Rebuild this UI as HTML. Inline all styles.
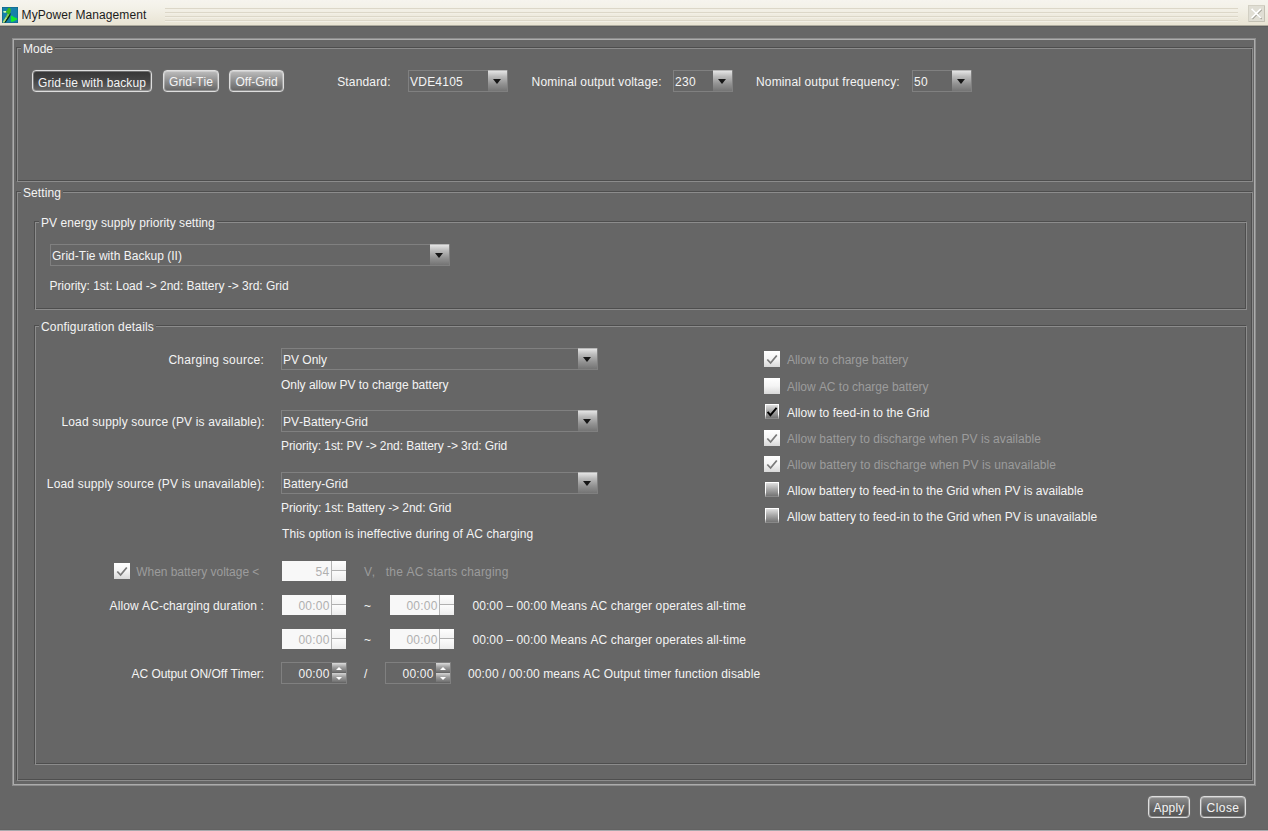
<!DOCTYPE html>
<html><head><meta charset="utf-8"><title>MyPower Management</title>
<style>
html,body{margin:0;padding:0}
body{width:1268px;height:831px;position:relative;overflow:hidden;background:#666;font:12px/14px "Liberation Sans",sans-serif;color:#f4f4f4;font-kerning:none}
.a{position:absolute}
.t{position:absolute;white-space:nowrap;height:14px;line-height:14px}
.d{color:#9c9c9c}
.ed{position:absolute;box-sizing:border-box;border:1px solid #4e4e4e}
.el{position:absolute;box-sizing:border-box;border:1px solid #8c8c8c}
.gt{position:absolute;white-space:nowrap;height:14px;line-height:14px;background:#666;padding:0 2px}
#tb{left:0;top:0;width:1268px;height:27px;background:linear-gradient(#f6f4ee 0,#f3f1e8 8px,#e9e4d4 24.5px,#e6e1d0 25px,#aeab9e 25px,#aeab9e 26px,#5c5c5c 26px,#5c5c5c 27px)}
.cb{position:absolute;box-sizing:border-box;height:22px;border:1px solid #808080}
.cb i{position:absolute;right:0;top:-1px;width:19px;height:21px;background:linear-gradient(#b8b8b8 0,#b8b8b8 1px,#e4e4e4 1px,#bcbcbc 30%,#939393 65%,#747474)}
.cb i:after{content:"";position:absolute;left:5px;top:9px;border:4.5px solid transparent;border-top:5px solid #161616;border-bottom:0}
.cb span{position:absolute;left:1px;top:4px;white-space:nowrap}
.btn{position:absolute;box-sizing:border-box;height:22px;border:1px solid #dedede;border-radius:4px;text-align:center;line-height:23px;background:linear-gradient(#bebebe,#8e8e8e 50%,#646464);color:#f4f4f4;box-shadow:inset 0 0 0 1px rgba(255,255,255,.28),0 0 1px rgba(255,255,255,.35);white-space:nowrap}
.btn.sel{background:linear-gradient(#363636,#464646 50%,#686868);line-height:25px}
.btn.dk{background:linear-gradient(#8e8e8e,#686868 50%,#545454)}
.ck{position:absolute;box-sizing:border-box;width:16px;height:16px}
.ck.dis{background:linear-gradient(#fff,#f4f4f4 50%,#d8d8d8)}
.ck.en{width:14px;height:15px;background:linear-gradient(#fff,#fff) top/100% 1px no-repeat,linear-gradient(#fff 0,#fff 70%,#8c8c8c) left/1px 100% no-repeat,linear-gradient(#fff 0,#fff 70%,#8c8c8c) right/1px 100% no-repeat,linear-gradient(#888,#888) bottom/100% 1px no-repeat,linear-gradient(#e8e8e8,#a6a6a6 50%,#6c6c6c)}
.ck svg{position:absolute;left:0;top:0}
.sp{position:absolute;box-sizing:border-box;width:64px;height:20px}
.sp.dis{background:#f8f8f8;color:#b0b0b0}
.sp.en{border:1px solid #808080;height:22px;width:66px}
.sp span{position:absolute;right:16.5px;top:4px;white-space:nowrap}
.sp.en span{right:16.4px;top:4px}
.sp b{position:absolute;right:0;top:0;width:15px;height:20px;border-left:1px solid #b4b4b4;box-sizing:border-box;background:linear-gradient(#fefefe 0,#f2f2f2 9px,#b0b0b0 9px,#b0b0b0 10px,#fcfcfc 10px,#ececec 20px)}
.sp u,.sp s{position:absolute;right:0;width:14px;text-decoration:none}
.sp u{top:0;height:9px;background:linear-gradient(#dcdcdc,#a0a0a0 45%,#707070)}
.sp s{top:10px;height:9px;background:linear-gradient(#d4d4d4,#9c9c9c 45%,#707070)}
.sp u:after{content:"";position:absolute;left:4px;top:3.5px;border:3px solid transparent;border-bottom:3px solid #fff;border-top:0}
.sp s:after{content:"";position:absolute;left:4px;top:3.5px;border:3px solid transparent;border-top:3px solid #fff;border-bottom:0}
</style></head><body>
<div class="a" id="tb"></div>
<svg class="a" style="left:2px;top:7px" width="16" height="16" viewBox="0 0 16 16">
<rect width="16" height="16" fill="#1681ab"/>
<path d="M0 0H16V16H0Z" fill="none" stroke="#11617f" stroke-width="1"/>
<path d="M8.6 6 C8.8 8 8 9.6 6.6 11.4 L3.6 15.6 L1.8 15.6 L6 9 Z" fill="#0a2c0c"/>
<path d="M6.8 0.7 C8.4 0.5 9 1.8 8.8 3.6 C8.7 5.2 8.2 6.6 7.2 7.6 L5.2 7.2 C5.5 6.6 5.5 6 5.4 5.6 L3 6 L1.4 5.2 L1.6 4 L5.2 3.8 C5.2 2.4 5.6 1 6.8 0.7Z" fill="#3cba1a"/>
<path d="M1.4 4.1 L4 3.9 L4.2 5.4 L2.6 5.7 L1.4 5.2Z" fill="#c9f2cf"/>
<path d="M5.4 6.8 L7.4 7.4 C6.6 9 5.6 10.4 4.4 12 L2.2 15.4 L0.6 15.2 L3.6 10.4 C4.4 9.2 5 8 5.4 6.8Z" fill="#86cc4c"/>
<path d="M3.8 10.2 L5 11 L2.2 15.4 L0.6 15.2Z" fill="#b4e27c"/>
<path d="M8.8 8.7 L10.8 8.7 L10.8 9.6 L15.2 11.4 L15.2 12.4 L10.8 14.8 L8.8 14.8Z" fill="#14ea2c"/>
</svg>
<div class="t" style="left:21.60px;top:8px;letter-spacing:0.073px;color:#1c1c1c">MyPower Management</div>
<div class="a" style="left:165px;top:8px;width:1073px;height:14px;background:repeating-linear-gradient(#dcd7c8 0,#dcd7c8 1px,#f2efe5 1px,#f2efe5 2px,transparent 2px,transparent 4px)"></div>
<svg class="a" style="left:1248px;top:5px" width="17" height="17" viewBox="0 0 17 17">
<rect x="0.5" y="0.5" width="16" height="16" fill="#e0ded4" stroke="#d3d0c4"/>
<path d="M1 16.5H16.5V1" fill="none" stroke="#c4c1b4" stroke-width="1"/>
<path d="M4.4 4.8 L13.6 14 M13.6 4.8 L4.4 14" stroke="#a3a298" stroke-width="1.3"/>
<path d="M3.6 3.8 L12.8 13 M12.8 3.8 L3.6 13" stroke="#fff" stroke-width="1.7"/>
</svg>
<div class="a" style="left:12px;top:38px;width:1244px;height:748px;box-sizing:border-box;border:1px solid #8c8c8c"></div><div class="a" style="left:13px;top:39px;width:1242px;height:746px;box-sizing:border-box;border:1px solid #acacac"></div>
<div class="ed" style="left:16px;top:47px;width:1236px;height:134px"></div><div class="el" style="left:17px;top:48px;width:1236px;height:134px"></div><div class="gt" style="left:21px;top:42px;letter-spacing:-0.004px">Mode</div>
<div class="btn sel" style="left:32px;top:70px;width:120px;letter-spacing:0.098px">Grid-tie with backup</div>
<div class="btn " style="left:163px;top:70px;width:56px;letter-spacing:0.083px">Grid-Tie</div>
<div class="btn " style="left:229px;top:70px;width:55px;letter-spacing:-0.083px">Off-Grid</div>
<div class="t" style="left:337.20px;top:75px;letter-spacing:0.157px">Standard:</div>
<div class="cb" style="left:408px;top:70px;width:100px"><span style="letter-spacing:0.233px">VDE4105</span><i></i></div>
<div class="t" style="left:531.60px;top:75px;letter-spacing:0.173px">Nominal output voltage:</div>
<div class="cb" style="left:673px;top:70px;width:60px"><span style="letter-spacing:0.326px">230</span><i></i></div>
<div class="t" style="left:756.00px;top:75px;letter-spacing:0.150px">Nominal output frequency:</div>
<div class="cb" style="left:912px;top:70px;width:60px"><span style="letter-spacing:0.326px">50</span><i></i></div>
<div class="ed" style="left:16px;top:191px;width:1236px;height:589px"></div><div class="el" style="left:17px;top:192px;width:1236px;height:589px"></div><div class="gt" style="left:21px;top:186px;letter-spacing:0.092px">Setting</div>
<div class="ed" style="left:34px;top:221px;width:1212px;height:88px"></div><div class="el" style="left:35px;top:222px;width:1212px;height:88px"></div><div class="gt" style="left:39px;top:216px;letter-spacing:0.052px">PV energy supply priority setting</div>
<div class="cb" style="left:50px;top:244px;width:400px"><span style="letter-spacing:0.025px">Grid-Tie with Backup (II)</span><i></i></div>
<div class="t" style="left:49.40px;top:279px;letter-spacing:-0.019px">Priority: 1st: Load -&gt; 2nd: Battery -&gt; 3rd: Grid</div>
<div class="ed" style="left:34px;top:325px;width:1212px;height:439px"></div><div class="el" style="left:35px;top:326px;width:1212px;height:439px"></div><div class="gt" style="left:39px;top:320px;letter-spacing:0.171px">Configuration details</div>
<div class="t" style="left:168.40px;top:353px;letter-spacing:0.270px">Charging source:</div>
<div class="cb" style="left:281px;top:348px;width:317px"><span style="letter-spacing:-0.002px">PV Only</span><i></i></div>
<div class="t" style="left:281.00px;top:378px;letter-spacing:-0.018px">Only allow PV to charge battery</div>
<div class="t" style="left:61.40px;top:415px;letter-spacing:0.157px">Load supply source (PV is available):</div>
<div class="cb" style="left:281px;top:410px;width:317px"><span style="letter-spacing:0.021px">PV-Battery-Grid</span><i></i></div>
<div class="t" style="left:281.00px;top:439px;letter-spacing:-0.071px">Priority: 1st: PV -&gt; 2nd: Battery -&gt; 3rd: Grid</div>
<div class="t" style="left:46.80px;top:477px;letter-spacing:0.181px">Load supply source (PV is unavailable):</div>
<div class="cb" style="left:281px;top:472px;width:317px"><span style="letter-spacing:0.027px">Battery-Grid</span><i></i></div>
<div class="t" style="left:281.00px;top:501px;letter-spacing:-0.039px">Priority: 1st: Battery -&gt; 2nd: Grid</div>
<div class="t" style="left:282.00px;top:527px;letter-spacing:0.077px">This option is ineffective during of AC charging</div>
<div class="ck dis" style="left:764px;top:351px;height:16px"><svg width="16" height="16"><path d="M3.3 8.5 L6.6 12 L12.8 4.5" fill="none" stroke="#7a7a7a" stroke-width="1.8"/></svg></div>
<div class="t d" style="left:787.00px;top:353px;letter-spacing:-0.034px">Allow to charge battery</div>
<div class="ck dis" style="left:764px;top:378px;height:16px"></div>
<div class="t d" style="left:787.00px;top:380px;letter-spacing:-0.022px">Allow AC to charge battery</div>
<div class="ck en" style="left:765px;top:404px"><svg width="14" height="15"><path d="M2.6 7.8 L5.4 11.2 L11.6 3.8" fill="none" stroke="#000" stroke-width="1.9"/></svg></div>
<div class="t" style="left:787.00px;top:406px;letter-spacing:0.035px">Allow to feed-in to the Grid</div>
<div class="ck dis" style="left:764px;top:430px;height:16px"><svg width="16" height="16"><path d="M3.3 8.5 L6.6 12 L12.8 4.5" fill="none" stroke="#7a7a7a" stroke-width="1.8"/></svg></div>
<div class="t d" style="left:787.00px;top:432px;letter-spacing:0.053px">Allow battery to discharge when PV is available</div>
<div class="ck dis" style="left:764px;top:456px;height:16px"><svg width="16" height="16"><path d="M3.3 8.5 L6.6 12 L12.8 4.5" fill="none" stroke="#7a7a7a" stroke-width="1.8"/></svg></div>
<div class="t d" style="left:787.00px;top:458px;letter-spacing:0.085px">Allow battery to discharge when PV is unavailable</div>
<div class="ck en" style="left:765px;top:482px"></div>
<div class="t" style="left:787.00px;top:484px;letter-spacing:0.015px">Allow battery to feed-in to the Grid when PV is available</div>
<div class="ck en" style="left:765px;top:508px"></div>
<div class="t" style="left:787.00px;top:510px;letter-spacing:0.022px">Allow battery to feed-in to the Grid when PV is unavailable</div>
<div class="ck dis" style="left:114px;top:563px;height:16px"><svg width="16" height="16"><path d="M3.3 8.5 L6.6 12 L12.8 4.5" fill="none" stroke="#7a7a7a" stroke-width="1.8"/></svg></div>
<div class="t d" style="left:136.20px;top:565px;letter-spacing:-0.028px">When battery voltage &lt;</div>
<div class="sp dis" style="left:282px;top:561px"><span style="letter-spacing:0.326px">54</span><b></b></div>
<div class="t d" style="left:364.00px;top:565px;letter-spacing:-0.169px">V,</div>
<div class="t d" style="left:385.80px;top:565px;letter-spacing:0.182px">the AC starts charging</div>
<div class="t" style="left:109.60px;top:599px;letter-spacing:0.081px">Allow AC-charging duration :</div>
<div class="sp dis" style="left:282px;top:595px"><span style="letter-spacing:0.194px">00:00</span><b></b></div>
<div class="t" style="left:364.00px;top:599px;letter-spacing:-0.008px">~</div>
<div class="sp dis" style="left:390px;top:595px"><span style="letter-spacing:0.194px">00:00</span><b></b></div>
<div class="t" style="left:472.40px;top:599px;letter-spacing:0.100px">00:00 – 00:00 Means AC charger operates all-time</div>
<div class="sp dis" style="left:282px;top:629px"><span style="letter-spacing:0.194px">00:00</span><b></b></div>
<div class="t" style="left:364.00px;top:633px;letter-spacing:-0.008px">~</div>
<div class="sp dis" style="left:390px;top:629px"><span style="letter-spacing:0.194px">00:00</span><b></b></div>
<div class="t" style="left:472.40px;top:633px;letter-spacing:0.100px">00:00 – 00:00 Means AC charger operates all-time</div>
<div class="t" style="left:131.60px;top:667px;letter-spacing:-0.070px">AC Output ON/Off Timer:</div>
<div class="sp en" style="left:281px;top:662px;"><span style="letter-spacing:0.194px">00:00</span><u></u><s></s></div>
<div class="t" style="left:364.00px;top:667px;letter-spacing:-0.334px">/</div>
<div class="sp en" style="left:385px;top:662px;"><span style="letter-spacing:0.194px">00:00</span><u></u><s></s></div>
<div class="t" style="left:468.00px;top:667px;letter-spacing:0.130px">00:00 / 00:00 means AC Output timer function disable</div>
<div class="btn dk" style="left:1148px;top:796px;width:42px;letter-spacing:0.196px">Apply</div>
<div class="btn dk" style="left:1200px;top:796px;width:46px;letter-spacing:0.464px">Close</div>
<div class="a" style="left:0;top:829px;width:1268px;height:2px;background:linear-gradient(#626262 0,#626262 1px,#a8a8ac 1px)"></div>
</body></html>
